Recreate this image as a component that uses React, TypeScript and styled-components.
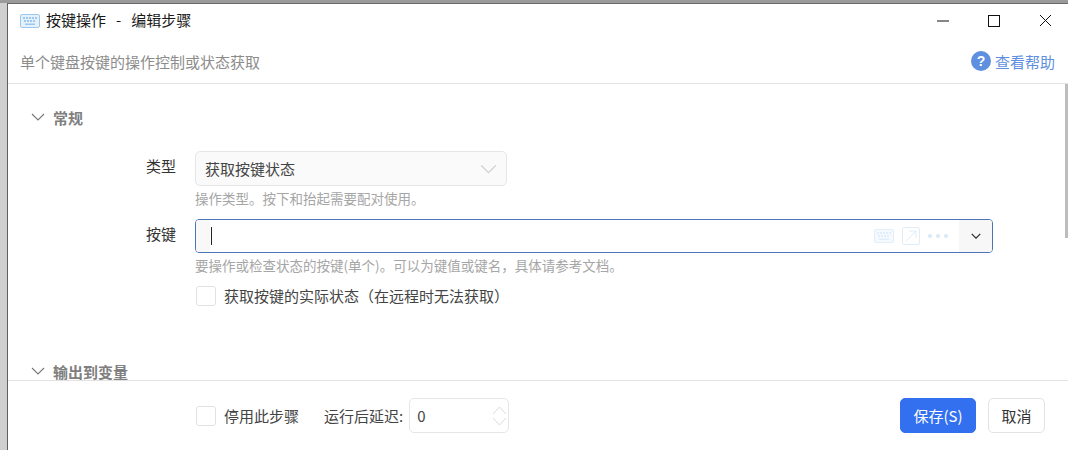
import React from "react";
import styled, { createGlobalStyle } from "styled-components";

const GlobalStyle = createGlobalStyle`
  html, body {
    margin: 0;
    height: 450px;
    overflow: hidden;
    background: #c9c9c9;
  }
  * {
    box-sizing: border-box;
  }
`;

const Desktop = styled.div`
  width: 1068px;
  height: 450px;
  padding: 3px 0 0 7px;
  background: linear-gradient(#9a9a9a, #9a9a9a 3px, #cfcfcf 3px);
  font-family: "Noto Sans CJK SC", "Noto Sans", sans-serif;
  font-size: 15px;
  color: #333;
`;

const Window = styled.div`
  display: flex;
  flex-direction: column;
  height: 447px;
  background: #fff;
  border-left: 1px solid #5f5f5f;
  border-top: 1px solid #6a6a6a;
`;

const TitleBar = styled.div`
  display: flex;
  align-items: center;
  height: 33px;
  padding-left: 12px;
  flex-shrink: 0;
`;

const Title = styled.div`
  margin: 0 0 3px 6px;
  color: #1a1a1a;
  white-space: pre;
  flex: 1;
`;

const WinButton = styled.div`
  width: 46px;
  height: 33px;
  display: flex;
  align-items: center;
  justify-content: center;
  margin-left: 5px;
`;

const SubHeader = styled.div`
  display: flex;
  align-items: center;
  justify-content: space-between;
  height: 47px;
  padding: 7px 13px 5px 12px;
  border-bottom: 1px solid #e3e3e3;
  flex-shrink: 0;
`;

const Description = styled.div`
  color: #8c8c8c;
`;

const HelpLink = styled.div`
  display: flex;
  align-items: center;
  gap: 4px;
  color: #5f8fdf;
`;

const Body = styled.div`
  position: relative;
  flex: 1;
  min-height: 0;
  overflow: hidden;
  padding: 21px 0 0 23px;
`;

const Scrollbar = styled.div`
  position: absolute;
  top: 0;
  right: 0;
  width: 3px;
  height: 154px;
  background: #bdbdbd;
`;

const SectionHeader = styled.div<{ $gap: number }>`
  display: flex;
  align-items: center;
  gap: 8px;
  height: 24px;
  margin-bottom: ${(p) => p.$gap}px;
  font-weight: 700;
  color: #7f7f7f;
`;

const FormRow = styled.div`
  display: flex;
  align-items: flex-start;
`;

const Label = styled.div`
  width: 164px;
  padding-right: 19px;
  text-align: right;
  line-height: 30px;
  color: #333;
`;

const Field = styled.div<{ $width: number }>`
  width: ${(p) => p.$width}px;
`;

const SelectBox = styled.div`
  display: flex;
  align-items: center;
  justify-content: space-between;
  height: 35px;
  padding: 0 9px;
  border: 1px solid #e6e6e6;
  border-radius: 5px;
  background: #fafafa;
  color: #444;
`;

const KeyInput = styled.div`
  display: flex;
  align-items: center;
  height: 34px;
  border: 1px solid #4a76b8;
  border-radius: 4px;
  overflow: hidden;
`;

const InputLead = styled.div`
  width: 14px;
  align-self: stretch;
  background: #f8f8f8;
`;

const Caret = styled.div`
  width: 1px;
  height: 18px;
  background: #222;
  margin-left: 1px;
`;

const InputIcons = styled.div`
  margin-left: auto;
  display: flex;
  align-items: center;
  gap: 8px;
  padding-right: 11px;
`;

const DropButton = styled.div`
  width: 33px;
  align-self: stretch;
  display: flex;
  align-items: center;
  justify-content: center;
  background: #f7f7f7;
`;

const Hint = styled.div<{ $bottom: number }>`
  font-size: 13.5px;
  line-height: 17px;
  padding-top: 4px;
  margin-bottom: ${(p) => p.$bottom}px;
  color: #a6a6a6;
`;

const CheckRow = styled.label`
  display: flex;
  align-items: center;
  gap: 8px;
  color: #444;
  line-height: 20px;
`;

const CheckBox = styled.span`
  width: 20px;
  height: 20px;
  border: 1px solid #e2e2e2;
  border-radius: 3px;
  background: #fff;
  flex-shrink: 0;
`;

const CheckOffset = styled.div`
  padding-left: 165px;
  margin-bottom: 53px;
`;

const Footer = styled.div`
  display: flex;
  align-items: center;
  height: 70px;
  flex-shrink: 0;
  padding: 0 23px 0 188px;
  border-top: 1px solid #e3e3e3;
`;

const DelayLabel = styled.span`
  margin-left: 25px;
  margin-right: 6px;
  color: #444;
`;

const NumberBox = styled.div`
  display: flex;
  align-items: center;
  justify-content: space-between;
  width: 100px;
  height: 35px;
  padding: 0 1px 0 7px;
  border: 1px solid #e6e6e6;
  border-radius: 5px;
  color: #444;
`;

const Actions = styled.div`
  margin-left: auto;
  display: flex;
  gap: 12px;
`;

const Button = styled.button<{ $primary?: boolean }>`
  height: 35px;
  width: ${(p) => (p.$primary ? 76 : 57)}px;
  padding: 0;
  border-radius: 5px;
  font: inherit;
  border: 1px solid ${(p) => (p.$primary ? "#3370f0" : "#e3e3e3")};
  background: ${(p) => (p.$primary ? "#3370f0" : "#fff")};
  color: ${(p) => (p.$primary ? "#fff" : "#333")};
`;

const Chevron = ({ color = "#777", size = 14, weight = 1.1 }: { color?: string; size?: number; weight?: number }) => (
  <svg width={size} height={Math.round(size * 0.6)} viewBox="0 0 14 8" fill="none">
    <path d="M1 1l6 6 6-6" stroke={color} strokeWidth={weight} />
  </svg>
);

const KeyboardIcon = ({ color, fill }: { color: string; fill: string }) => (
  <svg width="20" height="14" viewBox="0 0 20 14">
    <rect x="0.5" y="0.5" width="19" height="13" rx="1.5" fill={fill} stroke={color} />
    {[3, 6, 9, 12, 15].map((x) => (
      <rect key={x} x={x} y="3" width="2" height="2" fill={color} />
    ))}
    {[4, 7, 10, 13].map((x) => (
      <rect key={x} x={x} y="6" width="2" height="2" fill={color} />
    ))}
    <rect x="5" y="9.5" width="10" height="1.5" fill={color} />
  </svg>
);

const App = () => (
  <Desktop>
    <GlobalStyle />
    <Window>
      <TitleBar>
        <KeyboardIcon color="#9cc8ee" fill="#e4f1fb" />
        <Title>按键操作   -   编辑步骤</Title>
        <WinButton>
          <svg width="13" height="2" viewBox="0 0 13 2">
            <rect width="12" height="1" y="0.5" fill="#111" />
          </svg>
        </WinButton>
        <WinButton>
          <svg width="12" height="12" viewBox="0 0 12 12" fill="none">
            <rect x="0.5" y="0.5" width="11" height="11" stroke="#111" />
          </svg>
        </WinButton>
        <WinButton>
          <svg width="13" height="13" viewBox="0 0 13 13" fill="none">
            <path d="M1 1l11 11M12 1L1 12" stroke="#111" />
          </svg>
        </WinButton>
      </TitleBar>
      <SubHeader>
        <Description>单个键盘按键的操作控制或状态获取</Description>
        <HelpLink>
          <svg width="20" height="20" viewBox="0 0 20 20">
            <circle cx="10" cy="10" r="10" fill="#5f8fdf" />
            <text x="10" y="15" textAnchor="middle" fontSize="14" fontWeight="700" fontFamily="Liberation Sans" fill="#fff">?</text>
          </svg>
          查看帮助
        </HelpLink>
      </SubHeader>
      <Body>
        <Scrollbar />
        <SectionHeader $gap={22}>
          <Chevron />
          常规
        </SectionHeader>
        <FormRow>
          <Label>类型</Label>
          <Field $width={312}>
            <SelectBox>
              获取按键状态
              <Chevron color="#d0d0d0" size={17} />
            </SelectBox>
            <Hint $bottom={12}>操作类型。按下和抬起需要配对使用。</Hint>
          </Field>
        </FormRow>
        <FormRow>
          <Label>按键</Label>
          <Field $width={798}>
            <KeyInput>
              <InputLead />
              <Caret />
              <InputIcons>
                <KeyboardIcon color="#e0eefa" fill="#f6fafe" />
                <svg width="18" height="18" viewBox="0 0 18 18" fill="none">
                  <rect x="0.5" y="0.5" width="17" height="17" rx="1.5" stroke="#dfedf9" />
                  <path d="M4 14L14 4M7 4h7v7" stroke="#dfedf9" />
                </svg>
                <svg width="20" height="4" viewBox="0 0 20 4">
                  <circle cx="2" cy="2" r="2" fill="#d9e9f7" />
                  <circle cx="10" cy="2" r="2" fill="#d9e9f7" />
                  <circle cx="18" cy="2" r="2" fill="#d9e9f7" />
                </svg>
              </InputIcons>
              <DropButton>
                <Chevron color="#333" size={10} weight={1.8} />
              </DropButton>
            </KeyInput>
            <Hint $bottom={12}>要操作或检查状态的按键(单个)。可以为键值或键名，具体请参考文档。</Hint>
          </Field>
        </FormRow>
        <CheckOffset>
          <CheckRow>
            <CheckBox />
            获取按键的实际状态（在远程时无法获取）
          </CheckRow>
        </CheckOffset>
        <SectionHeader $gap={0}>
          <Chevron />
          输出到变量
        </SectionHeader>
      </Body>
      <Footer>
        <CheckRow>
          <CheckBox />
          停用此步骤
        </CheckRow>
        <DelayLabel>运行后延迟:</DelayLabel>
        <NumberBox>
          0
          <svg width="15" height="20" viewBox="0 0 15 20" fill="none">
            <path d="M1 8l6.500-7 6.500 7M1 12l6.500 7 6.500-7" stroke="#dcdcdc" />
          </svg>
        </NumberBox>
        <Actions>
          <Button $primary>保存(S)</Button>
          <Button>取消</Button>
        </Actions>
      </Footer>
    </Window>
  </Desktop>
);

export default App;
